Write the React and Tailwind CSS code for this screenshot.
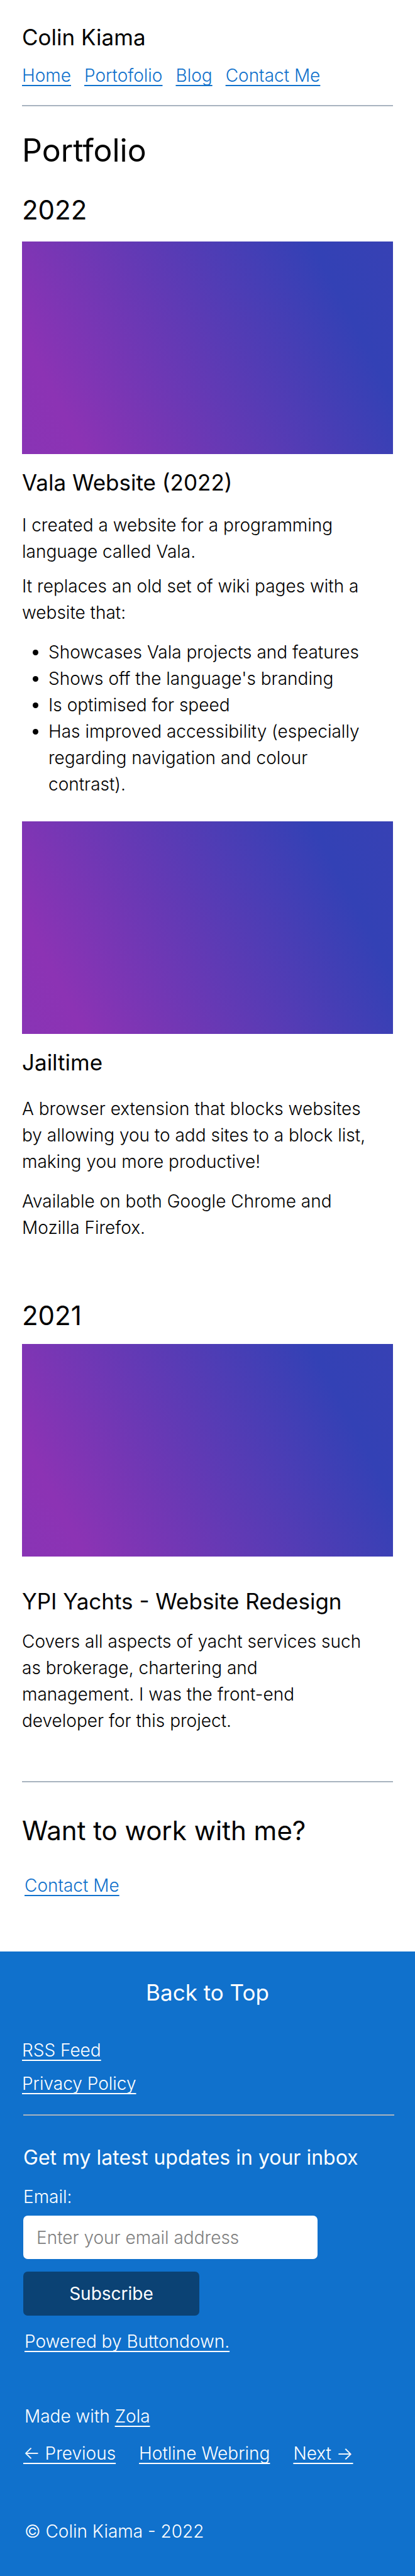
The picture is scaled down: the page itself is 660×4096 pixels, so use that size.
const linkBase = "underline decoration-2 underline-offset-[5px] [text-decoration-skip-ink:none]";
const blueLink = `${linkBase} text-[#1071cc]`;
const h3 = "text-[35px] leading-[42px] font-normal";
const h2 = "text-[42px] leading-[50px] font-normal";

function Thumb({ label, className }) {
  return (
    <div
      role="img"
      aria-label={label}
      className={`h-[338px] bg-[linear-gradient(62deg,#8934b5_0%,#8c33b4_13%,#3341b5_83%,#3741b4_100%)] ${className}`}
    />
  );
}

export default function App() {
  return (
    <div
      id="top"
      className="bg-white text-black font-light text-[28px] leading-[42px] font-['Inter',sans-serif]"
    >
      <div className="px-[35px] pt-[38px] pb-[84px]">
        <header>
          <p className={h3}>Colin Kiama</p>
          <nav className="mt-[19px] flex gap-[21px]">
            <a href="#home" className={blueLink}>Home</a>
            <a href="#portfolio" className={blueLink}>Portofolio</a>
            <a href="#blog" className={blueLink}>Blog</a>
            <a href="#contact" className={blueLink}>Contact Me</a>
          </nav>
          <hr className="mt-[26px] border-t-2 border-[#a8b3bf]" />
        </header>

        <main>
          <h1 id="portfolio" className="mt-10 text-[50px] leading-[60px] font-normal">Portfolio</h1>

          <section>
            <h2 className={`mt-10 ${h2}`}>2022</h2>

            <article>
              <Thumb label="Vala Website" className="mt-[25px]" />
              <h3 className={`mt-6 ${h3}`}>Vala Website (2022)</h3>
              <p className="mt-[26px] mr-6">I created a website for a programming language called Vala.</p>
              <p className="mt-[13px] mr-6">It replaces an old set of wiki pages with a website that:</p>
              <ul className="mt-[21px] mr-6 list-disc pl-[42px]">
                <li>Showcases Vala projects and features</li>
                <li>Shows off the language's branding</li>
                <li>Is optimised for speed</li>
                <li>Has improved accessibility (especially regarding navigation and colour contrast).</li>
              </ul>
            </article>

            <article>
              <Thumb label="Jailtime" className="mt-[38px]" />
              <h3 className={`mt-6 ${h3}`}>Jailtime</h3>
              <p className="mt-8 mr-6">
                A browser extension that blocks websites by allowing you to add sites to a block list, making you more productive!
              </p>
              <p className="mt-[21px] mr-6">Available on both Google Chrome and Mozilla Firefox.</p>
            </article>
          </section>

          <section>
            <h2 className={`mt-[94px] ${h2}`}>2021</h2>
            <article>
              <Thumb label="YPI Yachts" className="mt-5" />
              <h3 className={`mt-[50px] ${h3}`}>YPI Yachts - Website Redesign</h3>
              <p className="mt-[22px] mr-6">
                Covers all aspects of yacht services such as brokerage, chartering and
                <br />
                management. I was the front-end developer for this project.
              </p>
            </article>
          </section>

          <hr className="mt-[75px] border-t-2 border-[#a8b3bf]" />

          <section>
            <h2 className={`mt-[52px] ${h2}`}>Want to work with me?</h2>
            <p className="mt-[41px] pl-1">
              <a href="#contact" className={blueLink}>Contact Me</a>
            </p>
          </section>
        </main>
      </div>

      <footer className="bg-[#1071cc] px-[35px] pt-11 pb-[50px] text-white">
        <p className={`text-center ${h3}`}>
          <a href="#top">Back to Top</a>
        </p>
        <div className="mt-[50px] flex flex-col items-start gap-[11px]">
          <a href="#rss" className={linkBase}>RSS Feed</a>
          <a href="#privacy" className={linkBase}>Privacy Policy</a>
        </div>

        <div className="pl-0.5">
          <hr className="mt-7 -mr-0.5 border-t-2 border-[#a8b3bf]" />
          <form onSubmit={(e) => e.preventDefault()}>
            <h3 className="mt-[46px] text-[32px] leading-[42px] font-normal">Get my latest updates in your inbox</h3>
            <label htmlFor="email" className="mt-5 block">Email:</label>
            <input
              id="email"
              type="email"
              placeholder="Enter your email address"
              className="mt-[9px] block h-[69px] w-[468px] max-w-full rounded-[7px] bg-white px-[21px] text-black placeholder:text-[#808080]"
            />
            <button
              type="submit"
              className="mt-5 block h-[70px] w-[280px] rounded-[7px] bg-[#0b4274] font-normal"
            >
              Subscribe
            </button>
          </form>
          <p className="mt-5 pl-0.5">
            <a href="#buttondown" className={linkBase}>Powered by Buttondown.</a>
          </p>

          <p className="mt-[77px] pl-0.5">
            Made with <a href="#zola" className={linkBase}>Zola</a>
          </p>
          <nav className="mt-[17px] flex gap-[37px]">
            <a href="#previous" className={linkBase}>← Previous</a>
            <a href="#webring" className={linkBase}>Hotline Webring</a>
            <a href="#next" className={linkBase}>Next →</a>
          </nav>
          <p className="mt-[82px] pl-0.5">© Colin Kiama - 2022</p>
        </div>
      </footer>
    </div>
  );
}
